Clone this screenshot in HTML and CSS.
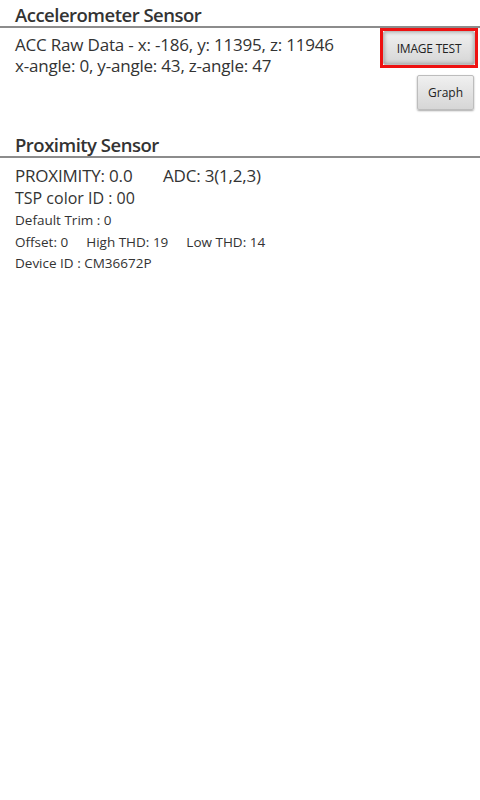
FILE: index.html
```html
<!DOCTYPE html>
<html>
<head>
<meta charset="utf-8">
<link rel="stylesheet" href="styles.css">
</head>
<body>
<div class="screen">
  <div class="section-title">Accelerometer Sensor</div>
  <div class="acc-row">
    <div class="acc-text">
      <div class="line-big">ACC Raw Data - x: -186, y: 11395, z: 11946</div>
      <div class="line-big">x-angle: 0, y-angle: 43, z-angle: 47</div>
    </div>
    <div class="buttons">
      <div class="highlight"><div class="btn btn-wide">IMAGE TEST</div></div>
      <div class="btn btn-graph">Graph</div>
    </div>
  </div>
  <div class="section-title">Proximity Sensor</div>
  <div class="prox">
    <div class="line-big prox-first"><span class="prox-val">PROXIMITY: 0.0</span><span>ADC: 3(1,2,3)</span></div>
    <div class="line-mid">TSP color ID : 00</div>
    <div class="line-small">Default Trim : 0</div>
    <div class="line-small"><span class="gap">Offset: 0</span><span class="gap">High THD: 19</span><span>Low THD: 14</span></div>
    <div class="line-small">Device ID : CM36672P</div>
  </div>
</div>
</body>
</html>
```
FILE: styles.css
```css
html, body {
  margin: 0;
  padding: 0;
  background: #ffffff;
}
.screen {
  width: 480px;
  height: 800px;
  font-family: "Open Sans", "DejaVu Sans", sans-serif;
  color: #333333;
}
.section-title {
  font-size: 18.5px;
  font-weight: 600;
  padding-left: 15px;
  height: 26px;
  line-height: 30px;
  border-bottom: 2px solid #8c8c8c;
  letter-spacing: -0.5px;
}
.acc-row {
  display: flex;
  justify-content: space-between;
  height: 102px;
}
.acc-text {
  padding-left: 15px;
  padding-top: 6px;
}
.line-big {
  font-size: 17px;
  line-height: 21px;
  letter-spacing: -0.2px;
}
.buttons {
  display: flex;
  flex-direction: column;
  align-items: flex-end;
  padding-right: 2px;
  gap: 7px;
}
.highlight {
  border: 3px solid #ee1111;
  padding: 0;
  width: 92px;
  height: 34px;
  box-sizing: content-box;
}
.btn {
  box-sizing: border-box;
  background: linear-gradient(#f0f0f0, #d6d6d6);
  border: 1px solid #bdbdbd;
  border-radius: 2px;
  box-shadow: 0 1px 2px rgba(0,0,0,0.35);
  color: #222;
  display: flex;
  align-items: center;
  justify-content: center;
  font-size: 12px;
}
.btn-wide {
  width: 92px;
  height: 34px;
  letter-spacing: -0.2px;
  box-shadow: inset 0 0 4px rgba(0,0,0,0.35);
}
.btn-graph {
  width: 57px;
  height: 35px;
  margin-right: 4px;
}
.prox {
  padding-left: 15px;
  padding-top: 7px;
}
.prox-first {
  line-height: 22px;
}
.prox-val {
  display: inline-block;
  width: 148px;
}
.line-mid {
  font-size: 16px;
  line-height: 23px;
  letter-spacing: 0;
}
.line-small {
  font-size: 13.5px;
  line-height: 21.5px;
  letter-spacing: 0;
}
.gap {
  margin-right: 18px;
}
```
